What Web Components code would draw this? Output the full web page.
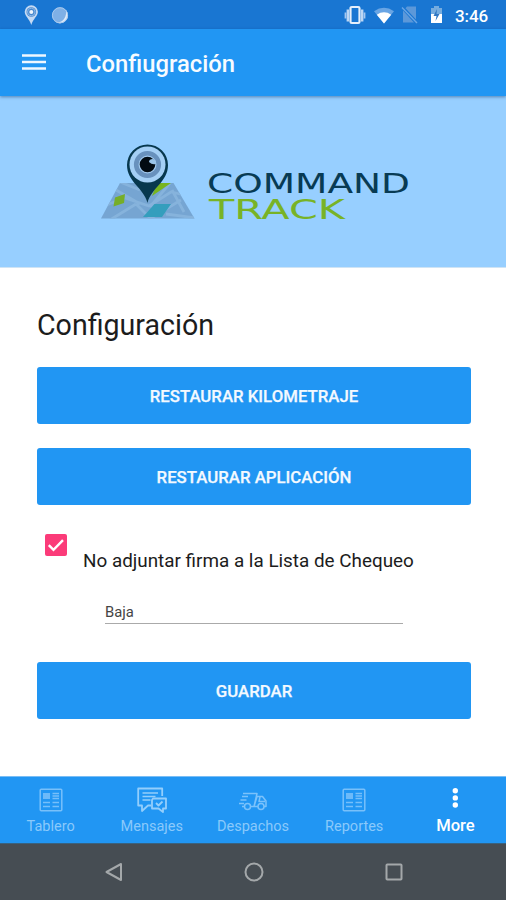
<!DOCTYPE html>
<html lang="es">
<head>
<meta charset="utf-8">
<title>Configuración</title>
<style>
html, body { margin: 0; height: 100%; }
body { font-family: Roboto, "Liberation Sans", sans-serif; background: #fff; overflow: hidden; }
</style>
</head>
<body>
<ct-app></ct-app>
<script>
const define = (name, html) => {
  const t = document.createElement('template');
  t.innerHTML = html;
  customElements.define(name, class extends HTMLElement {
    constructor() {
      super();
      this.attachShadow({ mode: 'open' }).append(t.content.cloneNode(true));
    }
  });
};

define('ct-status-bar', `
<style>
:host { display: flex; height: 29px; background: #1976d2; color: #fff; align-items: center; box-sizing: border-box; padding: 0 17px 0 24px; }
svg { display: block; flex: none; }
.gap { flex: 1; }
time { font-size: 17px; font-weight: 500; line-height: 20px; margin: 2px 0 0 12px; width: 34px; white-space: nowrap; letter-spacing: -.1px; }
</style>
<svg width="15" height="22" viewBox="0 0 15 22"><path d="M7.3 1.2a6.6 6.6 0 0 0-6.6 6.6c0 4.2 4.7 7 6.6 13.2 1.900-6.200 6.600-9 6.600-13.200a6.600 6.600 0 0 0-6.600-6.600z" fill="#c5daf4"/><circle cx="7.300" cy="8" r="4.800" fill="#4587ce"/><circle cx="7.300" cy="8" r="3.800" fill="none" stroke="#8db8e8"/><circle cx="7.300" cy="8" r="2" fill="#eef5fd"/></svg>
<svg width="18" height="20" viewBox="0 0 18 20" style="margin-left:12px"><circle cx="9" cy="10.300" r="8" fill="#7fb0e6"/><path d="M15 5a8 8 0 0 1-10 12.200c5 1 11-3 10-12.200z" fill="#dfebf9"/><circle cx="9" cy="10.300" r="7.600" fill="none" stroke="#a8c9ee"/></svg>
<span class="gap"></span>
<svg width="22" height="20" viewBox="0 0 22 20"><rect x="6.500" y="2" width="9" height="16" rx="1.300" fill="none" stroke="#e5effb" stroke-width="2.200"/><path d="M3.800 4.500v12M18.200 4.500v12" stroke="#bcd6f4" stroke-width="2.400"/><path d="M1.500 7.500v6M20.500 7.500v6" stroke="#a4c7ef" stroke-width="1.800"/></svg>
<svg width="22" height="18" viewBox="0 0 22 18" style="margin-left:7px"><path d="M1 5.200q10-6.800 20 0L11 17.500z" fill="#69a5e4"/><path d="M3.800 8.700q7.200-4.800 14.400 0L11 17.500z" fill="#fff"/></svg>
<svg width="18" height="19" viewBox="0 0 18 19" style="margin-left:6px"><path d="M6 1.500h9V14.500L4.500 3.200zM2 5.500L13 17.500H2z" fill="#5c98d9"/><path d="M1 2.500L16 18" stroke="#6ba6e5" stroke-width="1.400"/></svg>
<svg width="13" height="19" viewBox="0 0 13 19" style="margin-left:11px"><path d="M4 1h5v2h3v7H1V3h3z" fill="#75acdf"/><path d="M1 9h11v9H1z" fill="#fff"/><path d="M7 4L3.500 11h3l-1 5 4-7h-3z" fill="#3178c3"/></svg>
<time>3:46</time>`);

define('ct-app-bar', `
<style>
:host { display: flex; height: 67px; background: #2196f3; color: #f7fbff; align-items: center; box-sizing: border-box; padding: 0 22px; position: relative; z-index: 1; box-shadow: 0 1px 3px rgba(0,40,90,.45); }
svg { display: block; flex: none; margin-top: -1px; }
h1 { margin: 2px 0 0 40px; font-size: 23.800px; font-weight: 500; line-height: 30px; white-space: nowrap; }
</style>
<svg width="24" height="18" viewBox="0 0 24 18"><path d="M0 2.500h24M0 9h24M0 15.500h24" stroke="#eef7ff" stroke-width="2.400"/></svg>
<h1><slot></slot></h1>`);

define('ct-banner', `
<style>
:host { display: block; height: 172px; background: #97cfff; border-bottom: 1px solid #cfe4f5; box-sizing: border-box; }
svg { display: block; }
text { font-family: "DejaVu Sans", sans-serif; font-size: 26.500px; }
</style>
<svg width="506" height="171" viewBox="0 96 506 171">
  <clipPath id="map"><path d="M120 183h53.500l21 35.500H101z"/></clipPath>
  <g clip-path="url(#map)">
    <path d="M100 182h96v38h-96z" fill="#76a5d2"/>
    <g fill="none" stroke="#86b3dc" stroke-width="2.800">
      <path d="M101 207l24-9 24 8 22-14 18 4M110 220l26-16M116 190l24 14M148 220l33-20M170 183l-20 24M166 214l30 4M120 182l20 8M136 204l14 14M172 190l12 22"/>
    </g>
    <path d="M115 197.500l10-3.500-1 9-10.500 3.500z" fill="#76ae28"/>
    <path d="M157 183h14l-19 13z" fill="#78b51f"/>
    <path d="M154.500 204h16.500l-9 13h-19z" fill="#349ebd"/>
  </g>
  <path d="M147.500 203C144 188 127 182 127 165a20.500 20.500 0 0 1 41 0c0 17-17 23-20.500 38z" fill="#07384e"/>
  <circle cx="147.500" cy="164.500" r="18" fill="#a4cff5"/>
  <circle cx="147.500" cy="164.500" r="11.300" fill="#a0c8ed" stroke="#6891bd" stroke-width="4.600"/>
  <circle cx="147.500" cy="164.500" r="7.800" fill="#020b12"/>
  <path d="M149 162q0-3 4-3l3 2v3q-4 1-7-2z" fill="#9bc5ea"/>
  <text x="207" y="193" fill="#083b54" textLength="203" lengthAdjust="spacingAndGlyphs">COMMAND</text>
  <text x="209" y="218.500" fill="#78b326" textLength="136" lengthAdjust="spacingAndGlyphs">TRACK</text>
</svg>`);

define('ct-button', `
<style>
:host { display: block; }
button { display: flex; align-items: center; justify-content: center; width: 100%; height: 57px; border: 0; border-radius: 3px; padding: 1px 0 0; background: #2196f3; color: #f3f9ff; font: 500 16.800px/24px Roboto, sans-serif; -webkit-text-stroke: .25px #f3f9ff; box-sizing: border-box; }
</style>
<button><slot></slot></button>`);

define('ct-check', `
<style>
:host { display: flex; align-items: flex-start; gap: 16px; color: #1c1c1c; font-size: 18.870px; line-height: 26px; white-space: nowrap; }
svg { display: block; flex: none; }
span { margin-top: 14px; }
</style>
<svg width="22" height="22" viewBox="0 0 22 22"><rect width="22" height="22" rx="2" fill="#fb3b79"/><path d="M3.800 11.200l4.700 4.700L18 6.200" fill="none" stroke="#fff" stroke-width="2.400"/></svg>
<span><slot></slot></span>`);

define('ct-field', `
<style>
:host { display: block; height: 24px; box-sizing: border-box; border-bottom: 1.500px solid #aaa; color: #444; font-size: 14.800px; line-height: 25px; }
</style>
<slot></slot>`);

define('ct-settings', `
<style>
:host { display: flex; flex-direction: column; flex: 1; min-height: 0; padding: 39px 35px 0 37px; }
h2 { margin: 0 0 24px; font-size: 28.600px; line-height: 36px; font-weight: 400; color: #1c1c1c; white-space: nowrap; }
.two { margin-top: 24px; }
ct-check { margin: 29px 0 0 8px; }
ct-field { margin: 26px 68px 38px; }
</style>
<h2>Configuración</h2>
<ct-button>RESTAURAR KILOMETRAJE</ct-button>
<ct-button class="two">RESTAURAR APLICACIÓN</ct-button>
<ct-check>No adjuntar firma a la Lista de Chequeo</ct-check>
<ct-field>Baja</ct-field>
<ct-button>GUARDAR</ct-button>`);

define('ct-tab', `
<style>
:host { display: flex; flex: 1; flex-direction: column; align-items: center; color: #8ac9fb; font-size: 14.500px; line-height: 20px; white-space: nowrap; }
:host([active]) { color: #fff; font-size: 16.600px; font-weight: 500; }
.icon { display: flex; height: 28px; align-items: center; margin: 9px 0 3px; }
:host([active]) .icon { margin: 8px 0 3px; }
</style>
<div class="icon"><slot name="icon"></slot></div>
<slot></slot>`);

define('ct-report-icon', `
<style>:host, svg { display: block; }</style>
<svg width="24" height="24" viewBox="0 0 24 24"><rect x="1.200" y="1.200" width="21.600" height="21.600" rx="1" fill="none" stroke="#78c0fa" stroke-width="1.500"/><path d="M4 5h7v6H4z" fill="#6cbaf9"/><path d="M13.500 5.500H20M13.500 8H20M13.500 10.500H20M4 14.500h7M4 18.500h7M13.500 14.500H20M13.500 18.500H20" stroke="#76bffa" stroke-width="1.600"/></svg>`);

define('ct-chat-icon', `
<style>:host, svg { display: block; }</style>
<svg width="30" height="27" viewBox="0 0 30 27" fill="none" stroke="#93cefc" stroke-width="1.800" stroke-linejoin="round"><path d="M14 18.500h-3L5 24v-5.500H1.200V1.500h24V9"/><path d="M5.500 6H21M5.500 9.500h13M5.500 13h8" stroke-width="1.400"/><path d="M16 11.500h13v10h-3V25l-4.500-3.500H15v-8.500z"/><path d="M19 16l2.500 2.500 4-4"/></svg>`);

define('ct-truck-icon', `
<style>:host { display: block; padding-top: 2px; } svg { display: block; }</style>
<svg width="30" height="20" viewBox="0 0 30 20" fill="none" stroke="#7bc2fb" stroke-width="1.500" stroke-linejoin="round"><path d="M5 2.500h14l-3 13h-3.500M6.500 15.500H4M4 5.500h6M2.500 9h6M1 12.500h5M19 5.500h5.500l3.500 4.500v5.500h-2M20 15.500h-4l3-10M22 6l-1 4.500h6"/><circle cx="9.500" cy="15.500" r="3"/><circle cx="23" cy="15.500" r="3"/></svg>`);

define('ct-tabs', `
<style>
:host { display: flex; height: 67px; background: #2196f3; border-top: 1px solid #79bdf5; box-sizing: border-box; }
svg { display: block; }
</style>
<ct-tab><ct-report-icon slot="icon"></ct-report-icon>Tablero</ct-tab>
<ct-tab><ct-chat-icon slot="icon"></ct-chat-icon>Mensajes</ct-tab>
<ct-tab><ct-truck-icon slot="icon"></ct-truck-icon>Despachos</ct-tab>
<ct-tab><ct-report-icon slot="icon"></ct-report-icon>Reportes</ct-tab>
<ct-tab active><svg slot="icon" width="8" height="24" viewBox="0 0 8 24" fill="#fff"><circle cx="4.300" cy="3.700" r="2.700"/><circle cx="4.300" cy="10.900" r="2.700"/><circle cx="4.300" cy="18" r="2.700"/></svg>More</ct-tab>`);

define('ct-system-nav', `
<style>
:host { display: flex; height: 57px; background: #464d53; border-top: 1px solid #39627f; box-sizing: border-box; align-items: center; justify-content: center; gap: 120px; padding-left: 1px; }
svg { display: block; fill: none; stroke: #a4a8aa; stroke-width: 2; }
</style>
<svg width="20" height="20" viewBox="0 0 20 20"><path d="M17 2v16L2.500 10z" stroke-linejoin="round"/></svg>
<svg width="20" height="20" viewBox="0 0 20 20"><circle cx="10" cy="10" r="8.500"/></svg>
<svg width="20" height="20" viewBox="0 0 20 20"><rect x="2.500" y="2.500" width="15" height="15" rx=".8"/></svg>`);

define('ct-app', `
<style>
:host { display: flex; flex-direction: column; width: 506px; height: 900px; background: #fff; overflow: hidden; }
</style>
<ct-status-bar></ct-status-bar>
<ct-app-bar>Confiugración</ct-app-bar>
<ct-banner></ct-banner>
<ct-settings></ct-settings>
<ct-tabs></ct-tabs>
<ct-system-nav></ct-system-nav>`);
</script>
</body>
</html>
